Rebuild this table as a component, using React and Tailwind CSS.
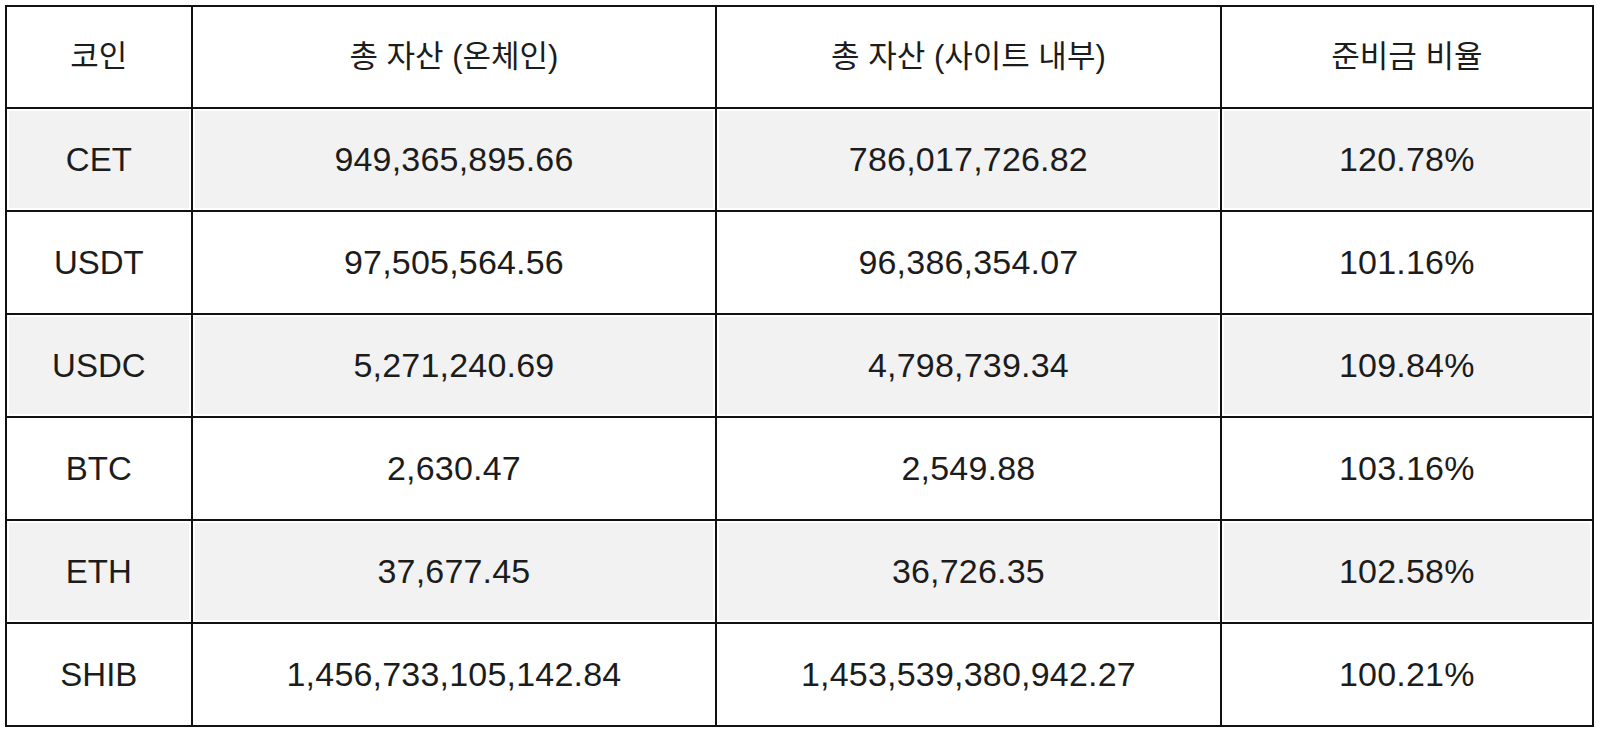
export default function App() {
  const rows = [
    ["CET", "949,365,895.66", "786,017,726.82", "120.78%"],
    ["USDT", "97,505,564.56", "96,386,354.07", "101.16%"],
    ["USDC", "5,271,240.69", "4,798,739.34", "109.84%"],
    ["BTC", "2,630.47", "2,549.88", "103.16%"],
    ["ETH", "37,677.45", "36,726.35", "102.58%"],
    ["SHIB", "1,456,733,105,142.84", "1,453,539,380,942.27", "100.21%"],
  ];
  const font = { fontFamily: '"Liberation Sans", "Noto Sans CJK KR", Arial, sans-serif' };
  return (
    <div className="w-[1600px] h-[731px] bg-white pt-[5px] pl-[5px]" style={font}>
      <table className="border-collapse w-[1589px] text-[#1c1c1c]">
        <colgroup>
          <col className="w-[186px]" />
          <col className="w-[525px]" />
          <col className="w-[505px]" />
          <col className="w-[373px]" />
        </colgroup>
        <thead>
          <tr className="h-[102px]">
            {["코인", "총 자산 (온체인)", "총 자산 (사이트 내부)", "준비금 비율"].map((h) => (
              <th key={h} className="border-2 border-[#111] font-normal text-[31px] text-center align-middle p-0">
                {h}
              </th>
            ))}
          </tr>
        </thead>
        <tbody>
          {rows.map((r, i) => (
            <tr key={r[0]} className="h-[103px]">
              {r.map((c, j) => (
                <td
                  key={j}
                  className={
                    "border-2 border-[#111] text-center align-middle p-0 " +
                    (j === 0 ? "text-[33px] " : "text-[34px] tracking-[0.2px] ") +
                    (i % 2 === 0 ? "bg-[#f2f2f2] shadow-[inset_0_0_0_2px_#ffffff]" : "bg-white")
                  }
                >
                  {c}
                </td>
              ))}
            </tr>
          ))}
        </tbody>
      </table>
    </div>
  );
}
